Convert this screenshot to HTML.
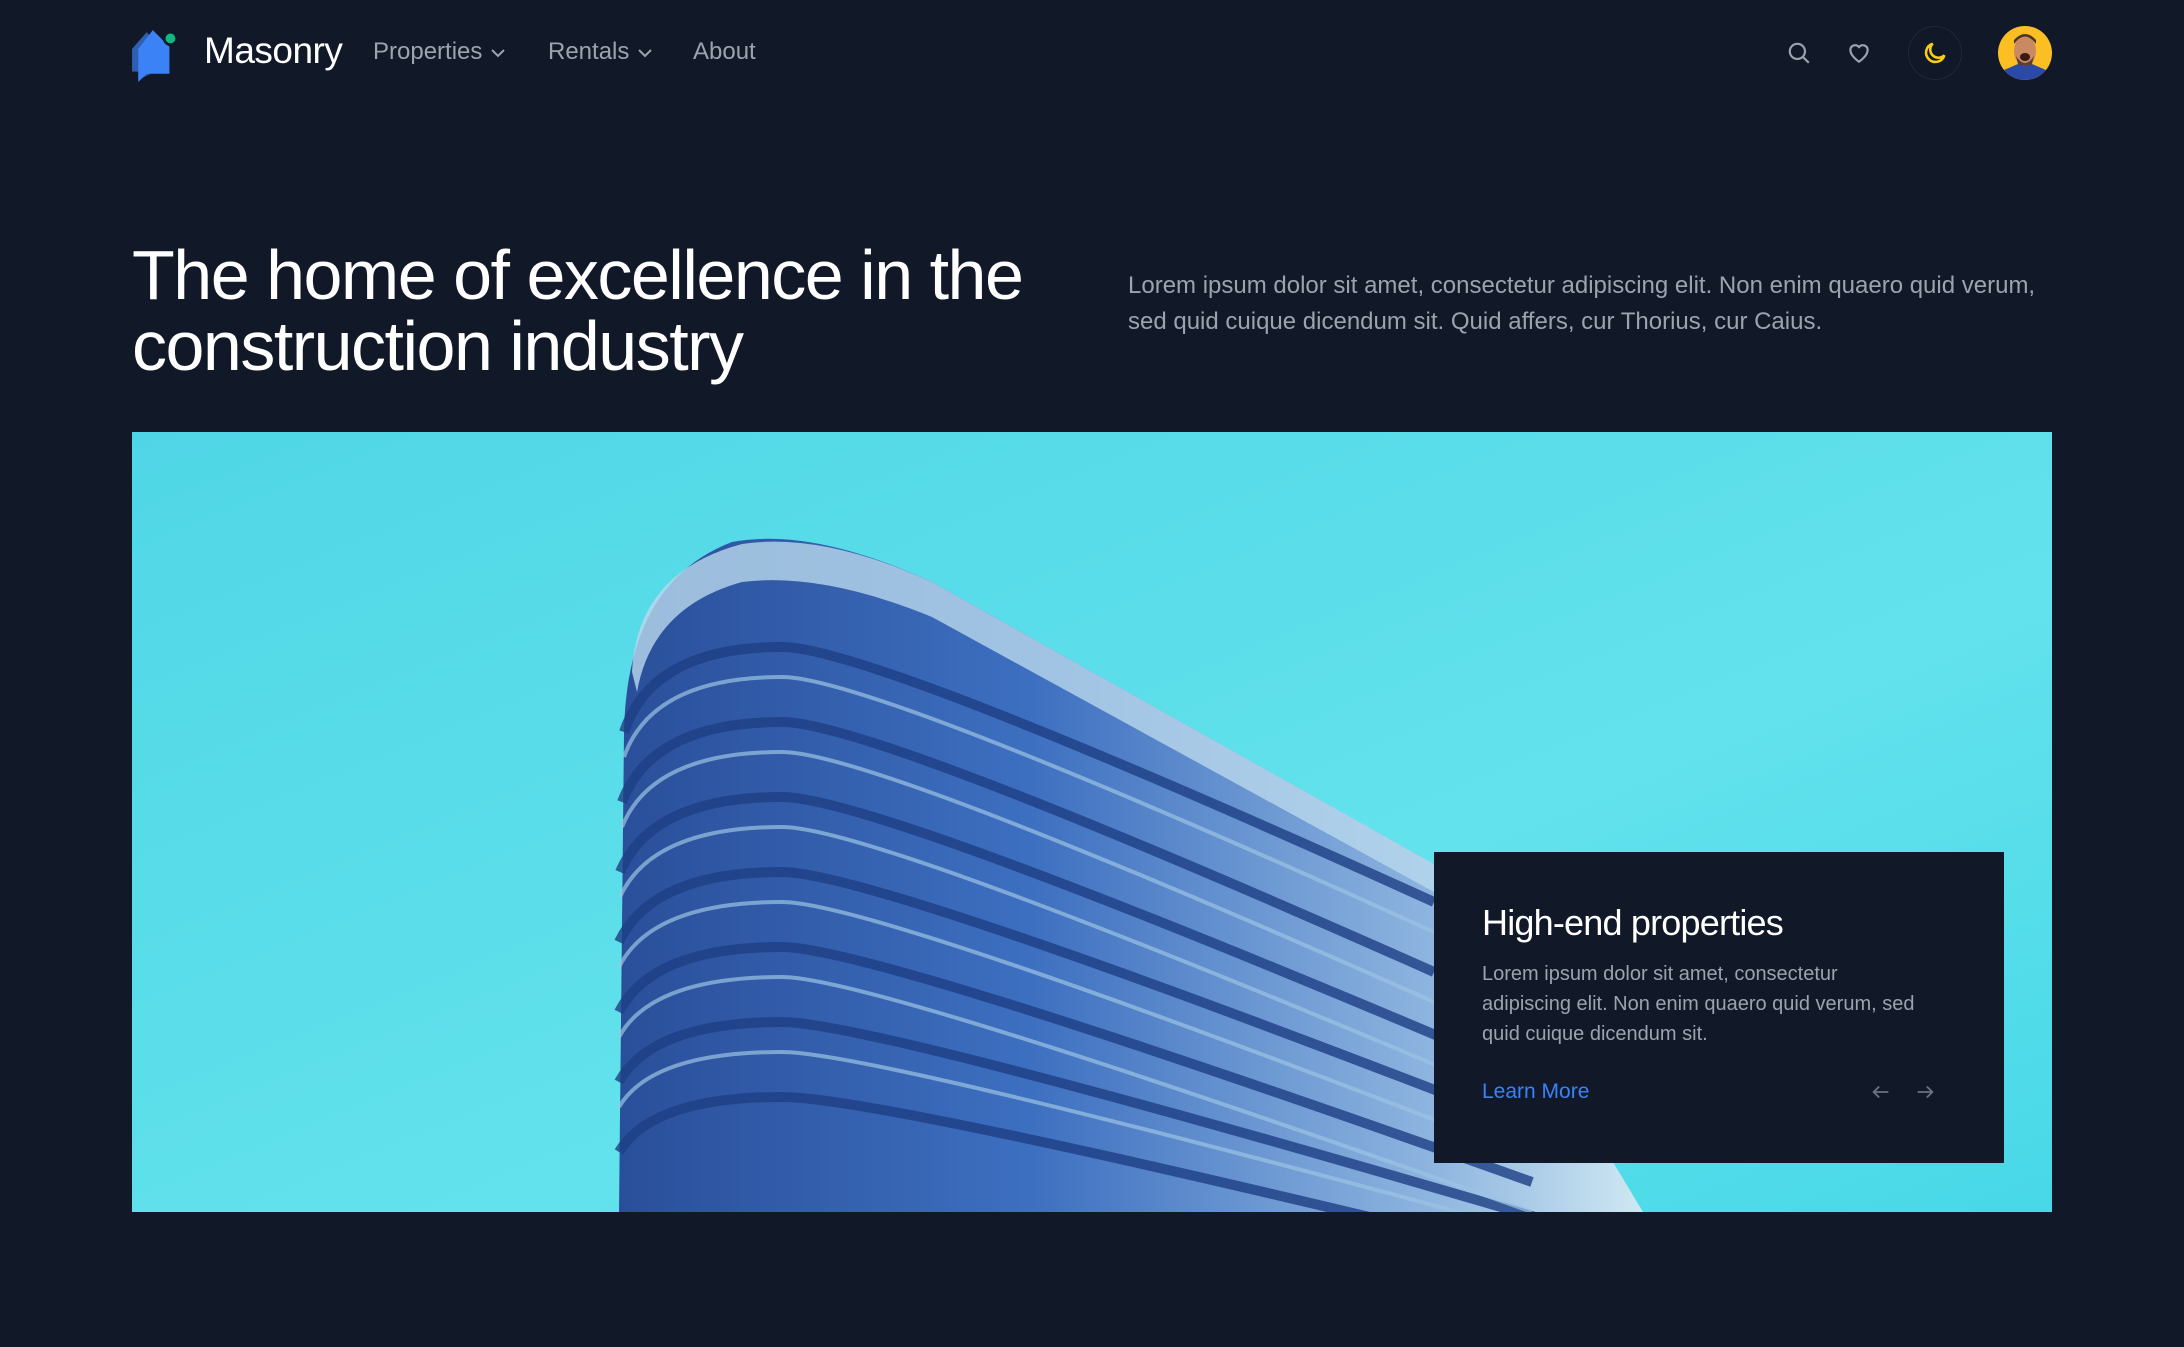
<!DOCTYPE html>
<html><head><meta charset="utf-8"><style>
*{margin:0;padding:0;box-sizing:border-box}
body{width:2184px;height:1347px;background:#111827;font-family:"Liberation Sans",sans-serif;position:relative;overflow:hidden}
.a{position:absolute}
.nav{color:#9ca3af;font-size:24px;top:38px}
.nav svg{vertical-align:middle;margin-left:8px}
</style></head><body>
<svg class="a" style="left:130px;top:26px" width="56" height="56" viewBox="0 0 54 54"><path d="M2 22 L16 6 L24 14 L24 44 L8 52 L8 44 L2 44Z" fill="#2f5fb3"/><path d="M8 22 L22 4 L38 20 L38 46 L16 46 L8 54Z" fill="#3b82f6"/><circle cx="39" cy="12" r="6" fill="#10b981" stroke="#111827" stroke-width="2.5"/></svg>
<div class="a" style="left:204px;top:30px;color:#fff;font-size:37px;letter-spacing:-0.5px">Masonry</div>
<div class="a nav" style="left:373px">Properties<svg width="16" height="10" viewBox="0 0 16 10"><path d="M2 2l6 6 6-6" stroke="#9ca3af" stroke-width="2" fill="none"/></svg></div>
<div class="a nav" style="left:548px">Rentals<svg width="16" height="10" viewBox="0 0 16 10"><path d="M2 2l6 6 6-6" stroke="#9ca3af" stroke-width="2" fill="none"/></svg></div>
<div class="a nav" style="left:693px">About</div>
<svg class="a" style="left:1786px;top:40px" width="26" height="26" viewBox="0 0 24 24" fill="none" stroke="#9ca3af" stroke-width="2"><circle cx="10.5" cy="10.5" r="7"/><path d="M16 16l5 5"/></svg>
<svg class="a" style="left:1846px;top:40px" width="26" height="26" viewBox="0 0 24 24" fill="none" stroke="#9ca3af" stroke-width="2"><path d="M12 20s-8-5-8-11a4.5 4.5 0 0 1 8-2.5A4.5 4.5 0 0 1 20 9c0 6-8 11-8 11z"/></svg>
<div class="a" style="left:1908px;top:26px;width:54px;height:54px;border-radius:50%;border:1px solid #1f2937"></div>
<svg class="a" style="left:1921px;top:39px" width="28" height="28" viewBox="0 0 24 24" fill="none" stroke="#facc15" stroke-width="2.2"><path d="M20 14A8 8 0 1 1 10 4a6 6 0 0 0 10 10z"/></svg>
<svg class="a" style="left:1998px;top:26px" width="54" height="54" viewBox="0 0 54 54"><defs><clipPath id="c"><circle cx="27" cy="27" r="27"/></clipPath></defs><g clip-path="url(#c)"><rect width="54" height="54" fill="#fbbf24"/><path d="M0 54 L6 44 L20 38 L34 38 L48 44 L54 54Z" fill="#2b4aa8"/><ellipse cx="27" cy="25" rx="11" ry="15" fill="#c98a62"/><path d="M16 18 Q27 3 38 18 L38 14 Q27 2 16 14Z" fill="#4a3428"/><path d="M18 30 Q27 44 36 30 L34 38 Q27 42 20 38Z" fill="#5a4034"/><ellipse cx="27" cy="31" rx="5" ry="4" fill="#3a1a14"/></g></svg>
<div class="a" style="left:132px;top:240px;color:#fff;font-size:70px;line-height:71px;letter-spacing:-1.5px;width:960px">The home of excellence in the construction industry</div>
<div class="a" style="left:1128px;top:268px;color:#9ca3af;font-size:24px;line-height:36px;width:940px">Lorem ipsum dolor sit amet, consectetur adipiscing elit. Non enim quaero quid verum, sed quid cuique dicendum sit. Quid affers, cur Thorius, cur Caius.</div>
<svg class="a" style="left:132px;top:432px" width="1920" height="780" viewBox="0 0 1920 780">
<defs><linearGradient id="bg" x1="0" y1="0" x2="1" y2="1"><stop offset="0" stop-color="#4fd6e6"/><stop offset="0.6" stop-color="#62e2ec"/><stop offset="1" stop-color="#48d8e8"/></linearGradient>
<linearGradient id="bd" x1="0" y1="0" x2="1" y2="0"><stop offset="0" stop-color="#2a4f9a"/><stop offset="0.4" stop-color="#3d6fc0"/><stop offset="0.8" stop-color="#8fb6e0"/><stop offset="1" stop-color="#cfe8f2"/></linearGradient></defs>
<rect width="1920" height="780" fill="url(#bg)"/>
<path d="M487 780 L492 300 Q495 150 600 110 Q680 95 800 150 L1302 432 L1511 780Z" fill="url(#bd)"/>
<path d="M500 240 Q505 140 610 112 Q690 100 800 150 L1302 432 L1302 460 L800 185 Q690 140 610 150 Q520 175 505 260Z" fill="#b9d8ec" opacity="0.8"/>
<g stroke="#1e3f85" stroke-width="10" fill="none" opacity="0.8">
<path d="M492 300 Q520 215 650 215 Q740 215 1302 470"/>
<path d="M490 370 Q520 290 650 290 Q740 290 1302 540"/>
<path d="M488 440 Q520 365 650 365 Q740 365 1320 610"/>
<path d="M487 510 Q520 440 650 440 Q740 440 1360 680"/>
<path d="M487 580 Q520 515 650 515 Q740 515 1400 750"/>
<path d="M487 650 Q520 590 650 590 Q740 590 1420 790"/>
<path d="M487 720 Q520 665 650 665 Q740 665 1300 800"/>
</g>
<g stroke="#9cc4e4" stroke-width="4" fill="none" opacity="0.7">
<path d="M492 325 Q520 245 650 245 Q740 245 1302 500"/>
<path d="M490 395 Q520 320 650 320 Q740 320 1302 570"/>
<path d="M488 465 Q520 395 650 395 Q740 395 1320 640"/>
<path d="M487 535 Q520 470 650 470 Q740 470 1360 710"/>
<path d="M487 605 Q520 545 650 545 Q740 545 1400 780"/>
<path d="M487 675 Q520 620 650 620 Q740 620 1400 800"/>
</g>
</svg>
<div class="a" style="left:1434px;top:852px;width:570px;height:311px;background:#111827">
<div class="a" style="left:48px;top:50px;color:#fff;font-size:36px;letter-spacing:-0.8px">High-end properties</div>
<div class="a" style="left:48px;top:107px;color:#9ca3af;font-size:20px;line-height:30px;width:440px">Lorem ipsum dolor sit amet, consectetur adipiscing elit. Non enim quaero quid verum, sed quid cuique dicendum sit.</div>
<div class="a" style="left:48px;top:228px;color:#3b82f6;font-size:21px">Learn More</div>
<svg class="a" style="left:436px;top:229px" width="22" height="22" viewBox="0 0 24 24" fill="none" stroke="#6b7280" stroke-width="2"><path d="M20 12H4M10 6l-6 6 6 6"/></svg>
<svg class="a" style="left:480px;top:229px" width="22" height="22" viewBox="0 0 24 24" fill="none" stroke="#6b7280" stroke-width="2"><path d="M4 12h16M14 6l6 6-6 6"/></svg>
</div>
</body></html>
